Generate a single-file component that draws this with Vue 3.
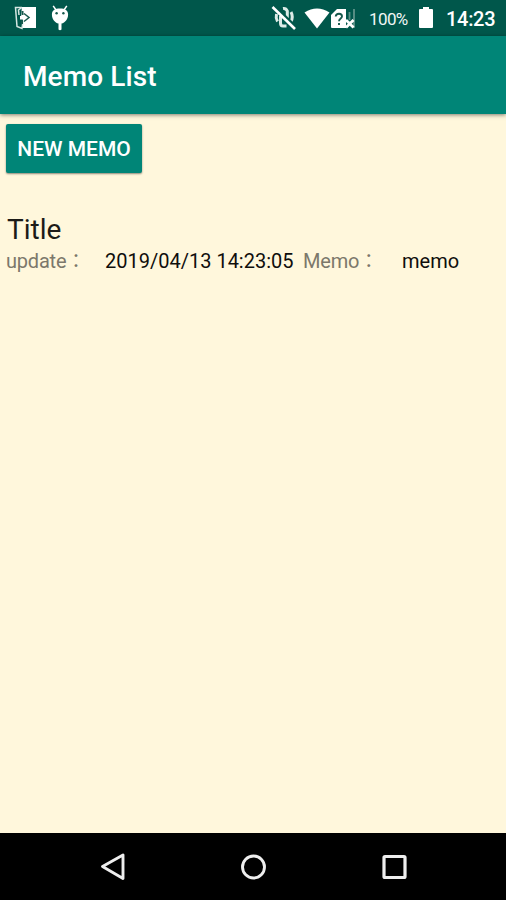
<script setup>
const memos = [{ title: 'Title', update: '2019/04/13 14:23:05', memo: 'memo' }]
</script>

<template>
  <div class="screen">
    <header class="status">
      <svg class="ic exit" width="24" height="24" viewBox="0 0 24 24">
        <path d="M8 1H22V22H8L9 14L7 9Z" fill="#fff" />
        <path d="M8 1.500H1.500L3 20.500L8 22.500L9 15M8 1.500L4.500 4L5 9" fill="none" stroke="#d5e6e2" stroke-width="1.500" />
        <path d="M6 10H10.500V8L15 11.500L10.500 15.500V13.500H6Z" fill="#fff" />
        <path d="M10 7.500L15 11.500L10 15.500" fill="none" stroke="#17594d" stroke-width="1.500" />
        <path d="M8.500 5V9M8 14.500V18" stroke="#17594d" stroke-width="2" />
      </svg>
      <svg class="ic droid" width="18" height="26" viewBox="0 0 18 26">
        <path d="M2.200 .8L5 5M15.800 .8L13 5" stroke="#fff" stroke-width="1.500" />
        <path d="M.9 9.500C.9 5.500 4 3.600 9 3.600S17.100 5.500 17.100 9.500C17.100 14 14 18 10.500 18.500V24.500Q9 26 7.500 24.500V18.500C4 18 .9 14 .9 9.500Z" fill="#fff" />
        <circle cx="5.600" cy="8.300" r="1.200" fill="#17594d" />
        <circle cx="12.400" cy="8.300" r="1.200" fill="#17594d" />
      </svg>
      <svg class="ic mute" width="26" height="26" viewBox="0 0 26 26">
        <path d="M5.500 9Q4.500 13 6.500 16.500M9.500 11V18Q9.500 21 12 21H15.500M12 3.500Q15 3 16.300 6V13M20 7Q22.500 12 20 16.500" fill="none" stroke="#dcebe7" stroke-width="3" />
        <path d="M4 1L25.500 22" stroke="#00574b" stroke-width="2" />
        <path d="M1.500 2L24 24" stroke="#fff" stroke-width="2.600" />
      </svg>
      <svg class="ic wifi" width="26" height="21" viewBox="0 0 26 21">
        <path d="M.5 4.500Q13-3.500 25.500 4.500L13 20.500Z" fill="#fff" />
      </svg>
      <svg class="ic sim" width="26" height="22" viewBox="0 0 26 22">
        <path d="M6 1H15V20H1Q0 20 0 19V7Z" fill="#fff" />
        <path d="M4.700 8.500Q5 5.700 8 5.700T11 8.300C11 10.500 8 10.500 8 13.300M8 15V17" fill="none" stroke="#17594d" stroke-width="1.900" />
        <path d="M18.500 4V12M23 1V20" stroke="#5e9389" stroke-width="1.800" />
        <path d="M15 12L22.500 19.500M22.500 12L15 19.500" stroke="#fff" stroke-width="2.800" />
      </svg>
      <span class="percent">100%</span>
      <svg class="ic battery" width="14" height="22" viewBox="0 0 14 22">
        <path d="M4 0H10V2H13Q14 2 14 3V20Q14 21 13 21H1Q0 21 0 20V3Q0 2 1 2H4Z" fill="#fff" />
      </svg>
      <span class="clock">14:23</span>
    </header>
    <div class="appbar"><h1>Memo List</h1></div>
    <main>
      <button class="new" type="button"><span>NEW MEMO</span></button>
      <article v-for="m in memos" :key="m.title" class="memo">
        <h2>{{ m.title }}</h2>
        <div class="line">
          <span class="label update">update<span class="colon">：</span></span>
          <span class="date">{{ m.update }}</span>
          <span class="label note">Memo<span class="colon">：</span></span>
          <span class="body">{{ m.memo }}</span>
        </div>
      </article>
    </main>
    <nav>
      <svg width="26" height="30" viewBox="0 0 26 30">
        <path d="M2.500 14.500L23 3V26.500Z" fill="none" stroke="#eee" stroke-width="2.900" stroke-linejoin="round" />
      </svg>
      <svg width="26" height="30" viewBox="0 0 26 30">
        <circle cx="13.500" cy="15" r="11" fill="none" stroke="#eee" stroke-width="2.900" />
      </svg>
      <svg width="26" height="30" viewBox="0 0 26 30">
        <rect x="3" y="4.500" width="21" height="21" rx="1" fill="none" stroke="#eee" stroke-width="3.200" />
      </svg>
    </nav>
  </div>
</template>

<style>
body { margin: 0; background: #fff7dc; }
</style>

<style scoped>
.screen {
  width: 506px;
  height: 900px;
  display: flex;
  flex-direction: column;
  background: #fff7dc;
  font-family: Roboto, "Noto Sans CJK JP", sans-serif;
  overflow: hidden;
}
.status {
  height: 36px;
  flex: none;
  display: flex;
  align-items: flex-start;
  background: #00574b;
  color: #fff;
}
.ic { display: block; flex: none; }
.exit { margin: 6px 0 0 14px; }
.droid { margin: 5px 0 0 13px; }
.mute { margin: 5px 0 0 202px; }
.wifi { margin: 8px 0 0 7px; }
.sim { margin: 8px 0 0 1px; }
.percent {
  width: 39px;
  margin: 9px 0 0 12px;
  font-size: 17px;
  line-height: 20px;
  letter-spacing: -0.6px;
  color: #f0f6f5;
}
.battery { margin: 7px 0 0 11px; }
.clock {
  margin: 7px 0 0 13px;
  font-size: 20px;
  line-height: 24px;
  font-weight: 500;
  letter-spacing: -0.3px;
}
.appbar {
  height: 78px;
  flex: none;
  display: flex;
  align-items: center;
  padding-left: 23px;
  background: #008577;
  box-shadow: 0 1px 4px rgba(0, 0, 0, 0.5);
}
h1 {
  margin: 4px 0 0;
  font-size: 28px;
  line-height: 34px;
  font-weight: 500;
  letter-spacing: 0.12px;
  color: #fff;
}
main { flex: 1; padding: 10px 6px 0; }
.new {
  display: flex;
  justify-content: center;
  align-items: center;
  width: 136px;
  height: 49px;
  padding: 0;
  border: 0;
  border-radius: 2px;
  background: #008577;
  box-shadow: 0 1px 2px rgba(0, 0, 0, 0.45);
  color: #fff;
  font-family: inherit;
  font-size: 21px;
  font-weight: 500;
  white-space: nowrap;
}
.memo { margin-top: 40px; }
h2 {
  margin: 0 0 0 1px;
  font-size: 28px;
  line-height: 34px;
  font-weight: 400;
  color: #1c1b18;
}
.line {
  display: flex;
  height: 26px;
  font-size: 20px;
  line-height: 26px;
  white-space: nowrap;
  margin-top: 1px;
  color: #0f0e0c;
}
.label { color: #7c786b; width: 99px; letter-spacing: -0.2px; }
.colon { font-size: 19px; line-height: 1; }
.date { width: 198px; }
nav {
  height: 67px;
  flex: none;
  display: flex;
  align-items: center;
  justify-content: center;
  gap: 114.500px;
  background: #000;
}
</style>
